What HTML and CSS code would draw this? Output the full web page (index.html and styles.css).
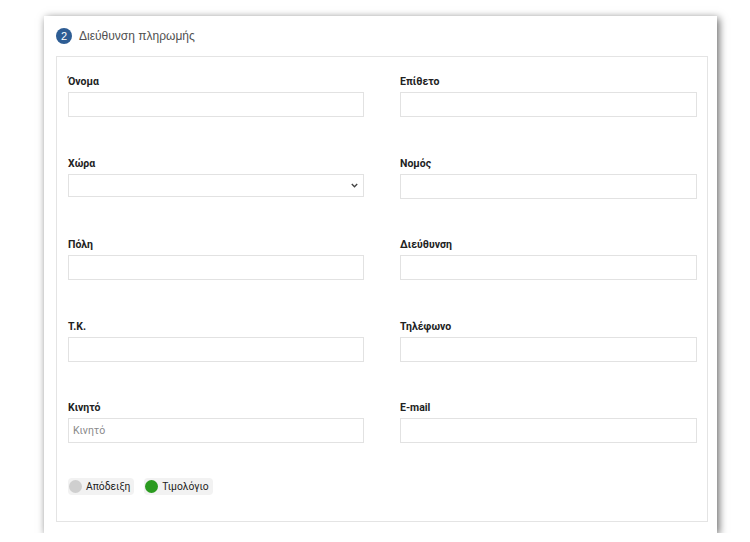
FILE: index.html
```html
<!DOCTYPE html>
<html lang="el">
<head>
<meta charset="utf-8">
<link rel="stylesheet" href="styles.css">
</head>
<body>
<div class="card">
  <div class="card-head">
    <span class="badge">2</span>
    <span class="title">Διεύθυνση πληρωμής</span>
  </div>
  <div class="panel">
    <div class="grid">
      <div class="field"><label class="lbl">Όνομα</label><input class="inp" type="text"></div>
      <div class="field"><label class="lbl">Επίθετο</label><input class="inp" type="text"></div>
      <div class="field"><label class="lbl">Χώρα</label>
        <div class="select"><svg class="chev" width="7" height="5" viewBox="0 0 7 5"><path d="M0.8 1 L3.5 3.7 L6.2 1" fill="none" stroke="#444" stroke-width="1.4"/></svg></div>
      </div>
      <div class="field"><label class="lbl">Νομός</label><input class="inp" type="text"></div>
      <div class="field"><label class="lbl">Πόλη</label><input class="inp" type="text"></div>
      <div class="field"><label class="lbl">Διεύθυνση</label><input class="inp" type="text"></div>
      <div class="field"><label class="lbl">Τ.Κ.</label><input class="inp" type="text"></div>
      <div class="field"><label class="lbl">Τηλέφωνο</label><input class="inp" type="text"></div>
      <div class="field"><label class="lbl">Κινητό</label><input class="inp" type="text" placeholder="Κινητό"></div>
      <div class="field"><label class="lbl">E-mail</label><input class="inp" type="text"></div>
    </div>
    <div class="options">
      <span class="pill"><span class="dot dot-off"></span>Απόδειξη</span>
      <span class="pill"><span class="dot dot-on"></span>Τιμολόγιο</span>
    </div>
  </div>
</div>
</body>
</html>
```
FILE: styles.css
```css
html, body {
  margin: 0;
  padding: 0;
  background: #ffffff;
}
body {
  padding-top: 16px;
  font-family: Roboto, "Liberation Sans", sans-serif;
}
.card {
  margin-left: 44px;
  width: 673px;
  height: 517px;
  box-sizing: border-box;
  background: #ffffff;
  box-shadow: 2px 2px 8px rgba(0, 0, 0, 0.6);
  padding: 12px 9px 11px 12px;
  display: flex;
  flex-direction: column;
}
.card-head {
  display: flex;
  align-items: center;
  height: 16px;
  gap: 7px;
}
.badge {
  width: 16px;
  height: 16px;
  border-radius: 50%;
  background: #2e5d94;
  color: #ffffff;
  font-family: "Liberation Sans", Arial, sans-serif;
  font-size: 11px;
  line-height: 16px;
  text-align: center;
}
.title {
  font-family: "Liberation Sans", Arial, sans-serif;
  font-size: 12px;
  color: #505050;
}
.panel {
  margin-top: 12px;
  flex: 1;
  border: 1px solid #e4e4e4;
  padding: 19px 10px 0 11px;
  box-sizing: border-box;
}
.grid {
  display: grid;
  grid-template-columns: 296px 297px;
  column-gap: 36px;
  row-gap: 40.5px;
}
.field {
  display: flex;
  flex-direction: column;
}
.lbl {
  display: block;
  height: 16px;
  font-size: 10.5px;
  font-weight: 700;
  color: #222222;
  line-height: 11px;
}
.inp {
  display: block;
  box-sizing: border-box;
  width: 100%;
  height: 25px;
  margin: 0;
  border: 1px solid #e2e2e2;
  padding: 0 4px;
  font-family: Roboto, "Noto Sans", sans-serif;
  font-size: 10.5px;
  color: #333333;
  background: #ffffff;
  outline: none;
}
.inp::placeholder {
  color: #8a8a8a;
}
.select {
  box-sizing: border-box;
  height: 23px;
  border: 1px solid #e2e2e2;
  display: flex;
  align-items: center;
  justify-content: flex-end;
  padding-right: 5px;
}
.chev {
  display: block;
}
.options {
  display: flex;
  gap: 10px;
  margin-top: 35px;
}
.pill {
  display: flex;
  align-items: center;
  height: 17px;
  padding: 0 4px 0 1px;
  border-radius: 4px;
  background: #f2f2f2;
  font-family: Roboto, "Noto Sans", sans-serif;
  font-size: 10.3px;
  color: #222222;
  gap: 4px;
}
.dot {
  width: 13px;
  height: 13px;
  border-radius: 50%;
  display: block;
}
.dot-off {
  background: #cfcfcf;
}
.dot-on {
  background: #2a9a1f;
}
```
